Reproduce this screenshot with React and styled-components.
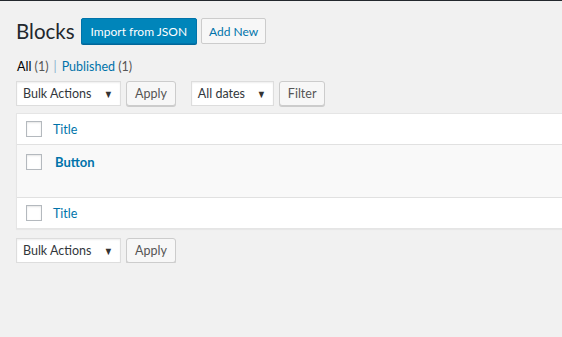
import React from "react";
import styled, { createGlobalStyle } from "styled-components";

const GlobalStyle = createGlobalStyle`
  html, body {
    margin: 0;
    padding: 0;
    background: #f1f1f1;
    overflow: hidden;
  }
  body {
    font-family: Lato, "Noto Sans", sans-serif;
    font-size: 12.5px;
    color: #444;
  }
`;

const AdminBar = styled.div`
  height: 1px;
  background: #23282d;
`;

const Wrap = styled.div`
  padding: 17px 0 0 16px;
`;

const HeadingRow = styled.div`
  display: flex;
  align-items: center;
  height: 26px;
`;

const Heading = styled.h1`
  margin: 0 6px 0 0;
  font-size: 20.5px;
  font-weight: 400;
  line-height: 29px;
  color: #23282d;
`;

const PageAction = styled.a`
  display: inline-flex;
  align-items: center;
  box-sizing: border-box;
  height: 26px;
  padding: 0 ${(p) => (p.$primary ? 9 : 7)}px;
  margin-right: 4px;
  border-radius: 2px;
  border: 1px solid ${(p) => (p.$primary ? "#0073aa" : "#ccc")};
  background: ${(p) => (p.$primary ? "#0085ba" : "#f7f7f7")};
  color: ${(p) => (p.$primary ? "#fff" : "#0073aa")};
  box-shadow: ${(p) => (p.$primary ? "0 1px 0 #006799" : "none")};
  font-weight: 400;
  font-size: 12px;
  text-decoration: none;
  white-space: nowrap;
`;

const Views = styled.ul`
  display: flex;
  list-style: none;
  margin: 14px 0 0 1px;
  padding: 0;
  height: 18px;
  line-height: 18px;
  font-size: 12.5px;
  color: #666;
`;

const ViewItem = styled.li`
  color: ${(p) => (p.$current ? "#000" : "#0073aa")};
`;

const Count = styled.span`
  color: #555;
`;

const Sep = styled.span`
  color: #8ab4d0;
  margin: 0 5px;
`;

const TableNav = styled.div`
  display: flex;
  align-items: center;
  height: 25px;
  margin: ${(p) => p.$margin};
`;

const Select = styled.div`
  box-sizing: border-box;
  display: flex;
  align-items: center;
  justify-content: space-between;
  width: ${(p) => p.$width}px;
  height: 25px;
  padding: 0 6px 0 6px;
  margin-right: ${(p) => p.$gap}px;
  background: #fff;
  border: 1px solid #ddd;
  box-shadow: inset 0 1px 2px rgba(0, 0, 0, 0.07);
  color: #32373c;
  font-size: 12.5px;
`;

const Caret = styled.span`
  font-size: 11px;
  color: #333;
  transform: scaleX(0.85);
`;

const Button = styled.div`
  box-sizing: border-box;
  display: flex;
  align-items: center;
  height: 25px;
  padding: 0 8px;
  margin-right: ${(p) => p.$gap || 0}px;
  background: #f7f7f7;
  border: 1px solid #ccc;
  border-radius: 3px;
  box-shadow: 0 1px 0 #ccc;
  color: #555;
  font-size: 12.5px;
`;

const Table = styled.div`
  margin: 7px -20px 0 0;
  background: #fff;
  border: 1px solid #e5e5e5;
  box-shadow: 0 1px 1px rgba(0, 0, 0, 0.04);
`;

const Row = styled.div`
  display: flex;
  align-items: ${(p) => (p.$body ? "flex-start" : "center")};
  box-sizing: border-box;
  height: ${(p) => p.$height}px;
  padding: ${(p) => (p.$body ? "9px 0 0 9px" : "0 0 0 9px")};
  background: ${(p) => (p.$body ? "#f9f9f9" : "#fff")};
  border-bottom: ${(p) => (p.$divider ? "1px solid #e1e1e1" : "none")};
`;

const Checkbox = styled.span`
  box-sizing: border-box;
  flex: none;
  width: 16px;
  height: 16px;
  border: 1px solid #b4b9be;
  background: #fff;
  box-shadow: inset 0 1px 2px rgba(0, 0, 0, 0.1);
  margin-right: ${(p) => p.$gap}px;
`;

const ColumnLink = styled.span`
  color: #0073aa;
  font-size: 12.5px;
`;

const RowTitle = styled.strong`
  color: #0073aa;
  font-size: 13px;
  font-weight: 700;
  line-height: 16px;
`;

export default function App() {
  return (
    <>
      <GlobalStyle />
      <AdminBar />
      <Wrap>
        <HeadingRow>
          <Heading>Blocks</Heading>
          <PageAction $primary>Import from JSON</PageAction>
          <PageAction>Add New</PageAction>
        </HeadingRow>
        <Views>
          <ViewItem $current>
            All <Count>(1)</Count>
          </ViewItem>
          <Sep>|</Sep>
          <ViewItem>
            Published <Count>(1)</Count>
          </ViewItem>
        </Views>
        <TableNav $margin="5px 0 0">
          <Select $width={105} $gap={5}>
            Bulk Actions <Caret>▼</Caret>
          </Select>
          <Button $gap={15}>Apply</Button>
          <Select $width={83} $gap={5}>
            All dates <Caret>▼</Caret>
          </Select>
          <Button>Filter</Button>
        </TableNav>
        <Table>
          <Row $height={31} $divider>
            <Checkbox $gap={11} />
            <ColumnLink>Title</ColumnLink>
          </Row>
          <Row $height={53} $body $divider>
            <Checkbox $gap={13} />
            <RowTitle>Button</RowTitle>
          </Row>
          <Row $height={30}>
            <Checkbox $gap={11} />
            <ColumnLink>Title</ColumnLink>
          </Row>
        </Table>
        <TableNav $margin="9px 0 0">
          <Select $width={105} $gap={5}>
            Bulk Actions <Caret>▼</Caret>
          </Select>
          <Button>Apply</Button>
        </TableNav>
      </Wrap>
    </>
  );
}
